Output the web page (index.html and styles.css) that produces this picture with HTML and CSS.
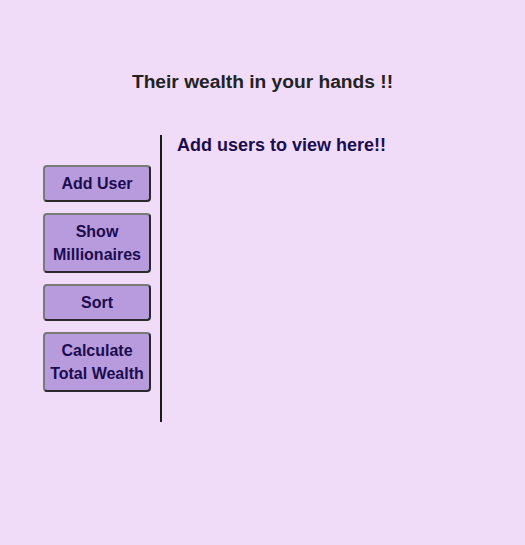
FILE: index.html
```html
<!DOCTYPE html>
<html>
<head>
<meta charset="utf-8">
<link rel="stylesheet" href="styles.css">
</head>
<body>
<h2 class="title">Their wealth in your hands !!</h2>
<div class="layout">
  <aside class="sidebar">
    <button class="btn">Add User</button>
    <button class="btn">Show Millionaires</button>
    <button class="btn">Sort</button>
    <button class="btn">Calculate Total Wealth</button>
  </aside>
  <main class="main">
    <h3 class="placeholder">Add users to view here!!</h3>
  </main>
</div>
</body>
</html>
```
FILE: styles.css
```css
body {
  margin: 0;
  background: #f0dcf8;
  font-family: "Liberation Sans", Arial, sans-serif;
}
.title {
  margin: 0;
  padding-top: 71px;
  text-align: center;
  font-size: 19.2px;
  line-height: 22px;
  font-weight: bold;
  color: #222;
}
.layout {
  display: flex;
  margin-top: 42px;
  padding-left: 43px;
}
.sidebar {
  display: flex;
  flex-direction: column;
  align-items: flex-start;
  gap: 11px;
  box-sizing: border-box;
  width: 119px;
  height: 287px;
  padding-top: 30px;
  border-right: 2px solid #1a1a1a;
}
.btn {
  width: 108px;
  padding: 5px 4px;
  font-family: "Liberation Sans", Arial, sans-serif;
  font-size: 16px;
  line-height: 23px;
  font-weight: bold;
  color: #1b0c4f;
  background: #b89bdd;
  border: 2px solid;
  border-color: #7a7a7a #2a2a2a #2a2a2a #7a7a7a;
  border-radius: 4px;
}
.main {
  padding-left: 15px;
}
.placeholder {
  margin: 0;
  font-size: 18px;
  line-height: 20px;
  font-weight: bold;
  color: #1b0c4f;
}
```
